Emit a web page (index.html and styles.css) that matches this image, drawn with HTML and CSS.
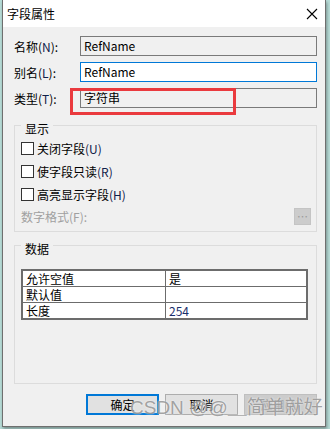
FILE: index.html
```html
<!DOCTYPE html>
<html lang="zh-CN">
<head>
  <meta charset="UTF-8" />
  <title>字段属性</title>
  <link rel="stylesheet" href="styles.css">
</head>
<body>
  <div class="dialog">
    <div class="titlebar">
      <span>字段属性</span>
      <svg class="close" width="12" height="12" viewBox="0 0 12 12">
        <path d="M1 1 L11 11 M11 1 L1 11" stroke="#000" stroke-width="1.1" fill="none" />
      </svg>
    </div>

    <div class="content">
      <div class="form">
        <label>名称(<u>N</u>):</label>
        <div class="field readonly">RefName</div>
        <label>别名(<u>L</u>):</label>
        <div class="field active">RefName</div>
        <label>类型(<u>T</u>):</label>
        <div class="field readonly">字符串</div>
      </div>

      <fieldset class="group">
        <legend>显示</legend>
        <div class="check"><span class="box"></span>关闭字段<span class="key">(U)</span></div>
        <div class="check"><span class="box"></span>使字段只读<span class="key">(R)</span></div>
        <div class="check"><span class="box"></span>高亮显示字段<span class="key">(H)</span></div>
        <div class="numfmt">
          <span>数字格式(F):</span>
          <span class="dots">…</span>
        </div>
      </fieldset>

      <fieldset class="group data">
        <legend>数据</legend>
        <table class="props">
          <tr><td>允许空值</td><td>是</td></tr>
          <tr><td>默认值</td><td></td></tr>
          <tr><td>长度</td><td class="num">254</td></tr>
        </table>
      </fieldset>

      <div class="buttons">
        <button class="default">确定</button>
        <button>取消</button>
        <button class="disabled">应用(A)</button>
      </div>
    </div>

    <div class="highlight"></div>
    <div class="watermark">CSDN @@＿简单就好</div>
  </div>
</body>
</html>
```

FILE: styles.css
```css
body {
  margin: 0;
  width: 330px;
  height: 429px;
  overflow: hidden;
  background: #b7dcd7;
  font-family: "Noto Sans CJK SC", "Liberation Sans", sans-serif;
  font-size: 12px;
  color: #000;
}

.dialog {
  position: relative;
  box-sizing: border-box;
  width: 324px;
  height: 427px;
  margin-left: 2px;
  background: #f0f0f0;
  border: 1px solid #6f6f6f;
  border-top: none;
  box-shadow: 1px 2px 3px rgba(0, 0, 0, 0.35);
}

.titlebar {
  height: 27px;
  background: #fff;
  display: flex;
  align-items: center;
  justify-content: space-between;
  padding: 0 7px 0 4px;
  font-size: 12px;
}

.content {
  padding: 9px 8px 0 11px;
}

.form {
  display: grid;
  grid-template-columns: 66px 1fr;
  row-gap: 6px;
  align-items: center;
}

.form label u,
.key {
  text-decoration: none;
  color: #10204a;
}

.field {
  box-sizing: border-box;
  height: 20px;
  line-height: 18px;
  padding-left: 3px;
  border: 1px solid #7a7a7a;
}

.field.readonly {
  background: #f0f0f0;
}

.field.active {
  background: #fff;
  border-color: #0078d7;
}

.group {
  margin: 5px 0 0 0;
  padding: 0 5px 6px 6px;
  border: 1px solid #dcdcdc;
  width: 303px;
  box-sizing: border-box;
}

.group legend {
  padding: 8px 4px 0 4px;
  line-height: 16px;
}

.check {
  height: 23px;
  display: flex;
  align-items: center;
}

.box {
  box-sizing: border-box;
  width: 13px;
  height: 13px;
  border: 1px solid #333;
  background: #fff;
  margin-right: 3px;
}

.numfmt {
  margin-top: 1px;
  height: 18px;
  display: flex;
  align-items: center;
  justify-content: space-between;
  color: #a0a0a0;
}

.dots {
  box-sizing: border-box;
  width: 17px;
  height: 17px;
  background: #cccccc;
  border: 1px solid #c4c4c4;
  color: #9a9a9a;
  text-align: center;
  line-height: 15px;
  font-size: 11px;
}

.group.data {
  margin-top: 1px;
  padding-bottom: 63px;
}

.props {
  margin-top: 12px;
  width: 287px;
  border-collapse: collapse;
  background: #fff;
  border: 2px solid #6c6c6c;
}

.props td {
  border: 1px solid #6c6c6c;
  height: 15px;
  padding: 0 3px;
  line-height: 15px;
}

.props td:first-child {
  width: 136px;
}

.props .num {
  color: #1a2f6c;
}

.buttons {
  margin-top: 10px;
  display: flex;
  justify-content: flex-end;
  gap: 6px;
}

.buttons button {
  box-sizing: border-box;
  width: 73px;
  height: 21px;
  padding: 0;
  font-family: inherit;
  font-size: 12px;
  background: #e1e1e1;
  border: 1px solid #adadad;
  color: #000;
}

.buttons button.default {
  border: 2px solid #0078d7;
}

.buttons button.disabled {
  background: #cccccc;
  border-color: #bfbfbf;
  color: #a0a0a0;
}

.highlight {
  position: absolute;
  left: 67px;
  top: 88px;
  width: 166px;
  height: 27px;
  box-sizing: border-box;
  border: 3px solid #ea3a3e;
}

.watermark {
  position: absolute;
  left: 127px;
  top: 396px;
  font-family: "Liberation Sans", "Noto Sans CJK SC", sans-serif;
  font-size: 19px;
  line-height: 24px;
  color: rgba(140, 140, 140, 0.8);
  text-shadow: 0 0 2px rgba(255, 255, 255, 0.9);
  white-space: nowrap;
}
```
